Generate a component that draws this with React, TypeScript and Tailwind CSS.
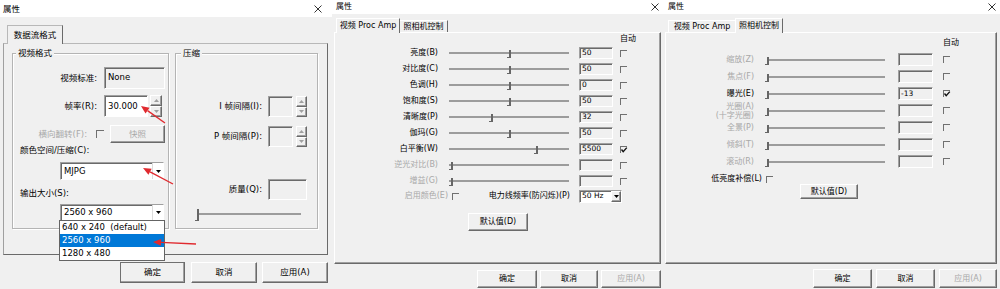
import React from "react";

const raised =
  "border border-t-white border-l-white border-r-[#6a6a6a] border-b-[#6a6a6a] shadow-[inset_-1px_-1px_0_#a0a0a0] bg-[#f0f0f0]";
const sunken =
  "border border-t-[#a0a0a0] border-l-[#a0a0a0] border-r-white border-b-white shadow-[inset_1px_1px_0_#6a6a6a]";
const dim = "text-[#a8a8a8]";
const font = "font-['DejaVu_Sans','Noto_Sans_CJK_SC',sans-serif]";

function CloseX() {
  return (
    <svg width="8" height="8" viewBox="0 0 8 8">
      <path d="M0.5 0.5 L7.5 7.5 M7.5 0.5 L0.5 7.5" stroke="#333" strokeWidth="1" />
    </svg>
  );
}

function Tri({ up = false, color = "#a0a0a0" }: { up?: boolean; color?: string }) {
  return (
    <svg width="5" height="3" viewBox="0 0 5 3">
      <path d={up ? "M0 3 L2.5 0 L5 3Z" : "M0 0 L5 0 L2.5 3Z"} fill={color} />
    </svg>
  );
}

function Check({ checked = false, className = "" }: { checked?: boolean; className?: string }) {
  return (
    <div className={`relative shrink-0 w-[7px] h-[7px] border-t border-l border-[#707070] ${className}`}>
      {checked && (
        <svg className="absolute -left-px -top-px" width="8" height="8" viewBox="0 0 8 8">
          <path d="M1.5 3.5 L3.2 5.6 L6.8 1.6" stroke="#111" strokeWidth="1.4" fill="none" />
        </svg>
      )}
    </div>
  );
}

function Spin({ className = "" }: { className?: string }) {
  return (
    <div className={`flex flex-col ${className}`}>
      <div className={`flex-1 flex items-center justify-center ${raised}`}>
        <Tri up />
      </div>
      <div className={`flex-1 flex items-center justify-center ${raised}`}>
        <Tri />
      </div>
    </div>
  );
}

function Thumb({ x, tall = false }: { x: number; tall?: boolean }) {
  return (
    <div
      className={`absolute top-1/2 w-[4px] border-r-2 border-b border-[#666] ${
        tall ? "-mt-[5px] h-[12px]" : "-mt-[3px] h-[8px]"
      }`}
      style={{ left: x - 3 }}
    />
  );
}

function Btn({
  children,
  className = "",
  disabled = false,
}: {
  children: React.ReactNode;
  className?: string;
  disabled?: boolean;
}) {
  return (
    <div
      className={`flex items-center justify-center shrink-0 ${raised} ${
        disabled ? dim : "text-black"
      } ${className}`}
    >
      {children}
    </div>
  );
}

function Arrow({ x1, y1, x2, y2 }: { x1: number; y1: number; x2: number; y2: number }) {
  const a = Math.atan2(y2 - y1, x2 - x1);
  const bx = x2 - 8 * Math.cos(a);
  const by = y2 - 8 * Math.sin(a);
  const w = 3.5;
  const pts = `${x2},${y2} ${bx + w * Math.sin(a)},${by - w * Math.cos(a)} ${bx - w * Math.sin(a)},${
    by + w * Math.cos(a)
  }`;
  return (
    <g>
      <line x1={x1} y1={y1} x2={bx} y2={by} stroke="#e02a2f" strokeWidth="1.4" />
      <polygon points={pts} fill="#e02a2f" />
    </g>
  );
}

function StreamFormatPanel() {
  return (
    <div className="relative w-[332px] h-[289px] shrink-0 bg-[#f0f0f0] text-[8.5px] text-black">
      <div className="h-[17px] bg-white flex items-center justify-between pl-[3px] pr-[10px]">
        <span className="leading-[10px]">属性</span>
        <CloseX />
      </div>
      <div className="pl-[3px] pt-[8px]">
        <div className="h-[18px] pl-[4px] flex">
          <div className="relative z-10 h-[19px] w-[56px] bg-[#f0f0f0] border-t border-l border-r border-t-[#b8b8b8] border-l-[#b8b8b8] border-r-[#6a6a6a] flex items-center justify-center">
            数据流格式
          </div>
        </div>
        <div className="w-[325px] h-[212px] border border-t-[#b8b8b8] border-l-[#a0a0a0] border-r-[#6a6a6a] border-b-[#6a6a6a] flex pl-[8px]">
          {/* 视频格式 */}
          <div className="mt-[9px] w-[157px] h-[176px] border border-[#b4b4b4] shadow-[inset_1px_1px_0_white,1px_1px_0_white]">
            <div className="-mt-[6px] ml-[3px] w-fit px-[2px] bg-[#f0f0f0] leading-[11px]">视频格式</div>
            <div className="flex items-center mt-[8px] h-[22px]">
              <div className="w-[84px] text-right">视频标准:</div>
              <div className={`ml-[7px] w-[61px] h-[22px] ${sunken} pl-[3px] pt-[4px] leading-[11px]`}>None</div>
            </div>
            <div className="flex items-center mt-[6px] h-[22px]">
              <div className="w-[84px] text-right">帧率(R):</div>
              <div className={`ml-[7px] w-[44px] h-[22px] bg-white ${sunken} pl-[3px] flex items-center`}>
                30.000
              </div>
              <Spin className="ml-[2px] w-[12px] h-[22px]" />
            </div>
            <div className="flex items-center mt-[8px] h-[18px]">
              <div className={`w-[74px] text-right ${dim}`}>横向翻转(F):</div>
              <Check className="ml-[9px] w-[8px] h-[8px]" />
              <Btn className="ml-[6px] w-[55px] h-[18px]" disabled>
                快照
              </Btn>
            </div>
            <div className="mt-[2px] ml-[7px] h-[11px] leading-[11px]">颜色空间/压缩(C):</div>
            <div className={`relative mt-[6px] ml-[47px] w-[104px] h-[18px] bg-white ${sunken} flex items-center`}>
              <span className="flex-1 pl-[3px]">MJPG</span>
              <div className="h-full w-[11px] flex items-center justify-center bg-white border-l border-[#dcdcdc]">
                <Tri color="#000" />
              </div>
            </div>
            <div className="mt-[8px] ml-[7px] h-[11px] leading-[11px]">输出大小(S):</div>
            <div className={`relative mt-[5px] ml-[47px] w-[104px] h-[17px] bg-white ${sunken} flex items-center`}>
              <span className="flex-1 pl-[3px]">2560 x 960</span>
              <div className="h-full w-[11px] flex items-center justify-center bg-white border-l border-[#dcdcdc]">
                <Tri color="#000" />
              </div>
              <div className="absolute left-[-2px] top-full w-[106px] h-[41px] bg-white border border-[#646464] z-20 flex flex-col">
                <div className="h-[13px] leading-[13px] pl-[2px] whitespace-pre">640 x 240  (default)</div>
                <div className="h-[13px] leading-[13px] pl-[2px] bg-[#0078d7] text-white">2560 x 960</div>
                <div className="h-[13px] leading-[13px] pl-[2px]">1280 x 480</div>
              </div>
            </div>
          </div>
          {/* 压缩 */}
          <div className="mt-[9px] ml-[6px] w-[143px] h-[176px] border border-[#b4b4b4] shadow-[inset_1px_1px_0_white,1px_1px_0_white]">
            <div className="-mt-[6px] ml-[5px] w-fit px-[2px] bg-[#f0f0f0] leading-[11px]">压缩</div>
            <div className="flex items-center mt-[37px] h-[21px]">
              <div className="w-[86px] text-right">I 帧间隔(I):</div>
              <div className={`ml-[6px] w-[25px] h-[21px] ${sunken}`} />
              <Spin className="ml-[3px] w-[11px] h-[21px]" />
            </div>
            <div className="flex items-center mt-[9px] h-[21px]">
              <div className="w-[86px] text-right">P 帧间隔(P):</div>
              <div className={`ml-[6px] w-[25px] h-[21px] ${sunken}`} />
              <Spin className="ml-[3px] w-[11px] h-[21px]" />
            </div>
            <div className="flex items-center mt-[32px] h-[21px]">
              <div className="w-[86px] text-right">质量(Q):</div>
              <div className={`ml-[6px] w-[39px] h-[21px] ${sunken}`} />
            </div>
            <div className="relative mt-[8px] ml-[21px] w-[104px] h-[12px] flex items-center">
              <div className="w-full h-[2px] bg-[#9c9c9c]" />
              <Thumb x={1} tall />
            </div>
          </div>
        </div>
      </div>
      <div className="mt-[7px] flex h-[21px]">
        <Btn className="ml-[120px] w-[65px] h-[21px] !border-t-[#707070] !border-l-[#707070]">确定</Btn>
        <Btn className="ml-[6px] w-[66px] h-[21px]">取消</Btn>
        <Btn className="ml-[5px] w-[66px] h-[21px]">应用(A)</Btn>
      </div>
      <svg className="absolute inset-0 pointer-events-none z-30" width="332" height="289" viewBox="0 0 332 289">
        <Arrow x1={165} y1={123} x2={141} y2={106} />
        <Arrow x1={173} y1={184} x2={143} y2={168} />
        <Arrow x1={196} y1={244} x2={153} y2={242} />
      </svg>
    </div>
  );
}

type AmpRow = {
  label: string;
  value: string;
  pos: number;
  checked?: boolean;
  disabled?: boolean;
};

const ampRows: AmpRow[] = [
  { label: "亮度(B)", value: "50", pos: 61 },
  { label: "对比度(C)", value: "50", pos: 61 },
  { label: "色调(H)", value: "0", pos: 61 },
  { label: "饱和度(S)", value: "50", pos: 61 },
  { label: "清晰度(P)", value: "32", pos: 43 },
  { label: "伽玛(G)", value: "50", pos: 61 },
  { label: "白平衡(W)", value: "5500", pos: 88, checked: true },
  { label: "逆光对比(B)", value: "", pos: 3, disabled: true },
  { label: "增益(G)", value: "", pos: 3, disabled: true },
];

function ProcAmpPanel() {
  return (
    <div className="w-[331px] h-[289px] shrink-0 bg-[#f0f0f0] text-[8px] text-black">
      <div className="h-[14px] bg-white flex items-center justify-between pl-[4px] pr-[4px]">
        <span className="leading-[10px]">属性</span>
        <CloseX />
      </div>
      <div className="pl-[2px] pt-[4px]">
        <div className="h-[14px] flex pl-[2px]">
          <div className="relative z-10 h-[15px] w-[64px] bg-[#f0f0f0] border-t border-l border-r border-t-white border-l-white border-r-[#6a6a6a] flex items-center justify-center">
            视频 Proc Amp
          </div>
          <div className="mt-[2px] h-[12px] w-[48px] border-t border-r border-t-white border-r-[#6a6a6a] flex items-center justify-center">
            照相机控制
          </div>
        </div>
        <div className="w-[327px] h-[232px] border border-t-white border-l-white border-r-[#6a6a6a] border-b-[#6a6a6a] shadow-[inset_-1px_-1px_0_#a0a0a0]">
          <div className="h-[12px] ml-[285px] leading-[12px]">自动</div>
          {ampRows.map((r) => (
            <div key={r.label} className="flex items-center h-[16px]">
              <div className={`w-[103px] text-right leading-[10px] ${r.disabled ? dim : ""}`}>{r.label}</div>
              <div className="relative ml-[11px] w-[120px] h-full flex items-center">
                <div className="w-full h-[2px] bg-[#9c9c9c]" />
                <Thumb x={r.pos} />
              </div>
              <div className={`ml-[10px] w-[34px] h-[12px] ${sunken} pl-[2px] leading-[10px] text-[7.5px]`}>
                {r.value}
              </div>
              <Check className="ml-[7px]" checked={r.checked} />
            </div>
          ))}
          <div className="flex items-center h-[14px]">
            <div className={`w-[113px] text-right leading-[10px] ${dim}`}>启用颜色(E)</div>
            <Check className="ml-[4px]" />
            <div className="w-[111px] text-right leading-[10px]">电力线频率(防闪烁)(P)</div>
            <div className={`ml-[9px] w-[43px] h-[13px] bg-white ${sunken} flex items-center`}>
              <span className="flex-1 pl-[2px] text-[7.5px]">50 Hz</span>
              <div className={`h-full w-[10px] flex items-center justify-center ${raised}`}>
                <Tri color="#000" />
              </div>
            </div>
          </div>
          <Btn className="mt-[10px] ml-[133px] w-[60px] h-[18px]">默认值(D)</Btn>
        </div>
      </div>
      <div className="mt-[6px] flex justify-end pr-[2px] gap-[3px] h-[18px]">
        <Btn className="w-[60px] h-[18px]">确定</Btn>
        <Btn className="w-[58px] h-[18px]">取消</Btn>
        <Btn className="w-[60px] h-[18px]" disabled>
          应用(A)
        </Btn>
      </div>
    </div>
  );
}

type CamRow = {
  label: string[];
  value: string;
  checked?: boolean;
  disabled?: boolean;
};

const camRows: CamRow[] = [
  { label: ["缩放(Z)"], value: "", disabled: true },
  { label: ["焦点(F)"], value: "", disabled: true },
  { label: ["曝光(E)"], value: "-13", checked: true },
  { label: ["光圈(A)", "(十字光圈)"], value: "", disabled: true },
  { label: ["全景(P)"], value: "", disabled: true },
  { label: ["倾斜(T)"], value: "", disabled: true },
  { label: ["滚动(R)"], value: "", disabled: true },
];

function CameraPanel() {
  return (
    <div className="w-[337px] h-[289px] shrink-0 bg-[#f0f0f0] text-[8px] text-black">
      <div className="h-[14px] bg-white flex items-center justify-between pl-[5px] pr-[4px]">
        <span className="leading-[10px]">属性</span>
        <CloseX />
      </div>
      <div className="pl-[2px] pt-[4px]">
        <div className="h-[14px] flex pl-[3px]">
          <div className="mt-[2px] h-[12px] w-[67px] border-t border-l border-t-white border-l-white flex items-center justify-center">
            视频 Proc Amp
          </div>
          <div className="relative z-10 h-[15px] w-[48px] bg-[#f0f0f0] border-t border-l border-r border-t-white border-l-white border-r-[#6a6a6a] flex items-center justify-center">
            照相机控制
          </div>
        </div>
        <div className="w-[332px] h-[232px] border border-t-white border-l-white border-r-[#6a6a6a] border-b-[#6a6a6a] shadow-[inset_-1px_-1px_0_#a0a0a0]">
          <div className="h-[18px] pt-[5px] ml-[277px] leading-[10px]">自动</div>
          {camRows.map((r) => (
            <div key={r.label[0]} className="flex items-center h-[17px]">
              <div className={`w-[88px] text-right leading-[9px] ${r.disabled ? dim : ""}`}>
                {r.label.map((l) => (
                  <div key={l}>{l}</div>
                ))}
              </div>
              <div className="relative ml-[13px] w-[118px] h-full flex items-center">
                <div className="w-full h-[2px] bg-[#9c9c9c]" />
                <Thumb x={1} />
              </div>
              <div className={`ml-[13px] w-[35px] h-[13px] ${sunken} pl-[2px] leading-[11px] text-[7.5px]`}>
                {r.value}
              </div>
              <Check className="ml-[10px]" checked={r.checked} />
            </div>
          ))}
          <div className="mt-[4px] flex items-center h-[10px]">
            <div className="w-[96px] text-right leading-[10px]">低亮度补偿(L)</div>
            <Check className="ml-[4px]" />
          </div>
          <Btn className="ml-[134px] w-[58px] h-[15px]">默认值(D)</Btn>
        </div>
      </div>
      <div className="mt-[5px] flex justify-end pr-[3px] gap-[4px] h-[19px]">
        <Btn className="w-[59px] h-[19px]">确定</Btn>
        <Btn className="w-[59px] h-[19px]">取消</Btn>
        <Btn className="w-[58px] h-[19px]" disabled>
          应用(A)
        </Btn>
      </div>
    </div>
  );
}

export default function App() {
  return (
    <div className={`flex w-[1000px] h-[289px] overflow-hidden bg-white ${font}`}>
      <StreamFormatPanel />
      <ProcAmpPanel />
      <CameraPanel />
    </div>
  );
}
